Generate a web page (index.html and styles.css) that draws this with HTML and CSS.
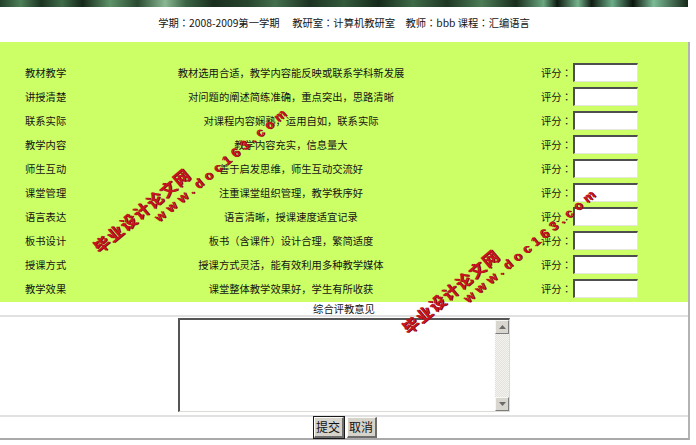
FILE: index.html
```html
<!DOCTYPE html>
<html lang="zh-CN">
<head>
<meta charset="utf-8">
<title>教学评价</title>
<link rel="stylesheet" href="styles.css">
</head>
<body>
<div class="page">
  <div class="banner"></div>
  <div class="header">学期<span class="c">：</span>2008-2009第一学期　 教研室<span class="c">：</span>计算机教研室　教师<span class="c">：</span>bbb 课程<span class="c">：</span>汇编语言</div>
  <form class="form">
    <div class="rating">
      <div class="row"><span class="label">教材教学</span><span class="desc">教材选用合适，教学内容能反映或联系学科新发展</span><span class="score-cell">评分<span class="c">：</span><input class="score" type="text"></span></div>
      <div class="row"><span class="label">讲授清楚</span><span class="desc">对问题的阐述简练准确，重点突出，思路清晰</span><span class="score-cell">评分<span class="c">：</span><input class="score" type="text"></span></div>
      <div class="row"><span class="label">联系实际</span><span class="desc">对课程内容娴熟，运用自如，联系实际</span><span class="score-cell">评分<span class="c">：</span><input class="score" type="text"></span></div>
      <div class="row"><span class="label">教学内容</span><span class="desc">教学内容充实，信息量大</span><span class="score-cell">评分<span class="c">：</span><input class="score" type="text"></span></div>
      <div class="row"><span class="label">师生互动</span><span class="desc">善于启发思维，师生互动交流好</span><span class="score-cell">评分<span class="c">：</span><input class="score" type="text"></span></div>
      <div class="row"><span class="label">课堂管理</span><span class="desc">注重课堂组织管理，教学秩序好</span><span class="score-cell">评分<span class="c">：</span><input class="score" type="text"></span></div>
      <div class="row"><span class="label">语言表达</span><span class="desc">语言清晰，授课速度适宜记录</span><span class="score-cell">评分<span class="c">：</span><input class="score" type="text"></span></div>
      <div class="row"><span class="label">板书设计</span><span class="desc">板书（含课件）设计合理，繁简适度</span><span class="score-cell">评分<span class="c">：</span><input class="score" type="text"></span></div>
      <div class="row"><span class="label">授课方式</span><span class="desc">授课方式灵活，能有效利用多种教学媒体</span><span class="score-cell">评分<span class="c">：</span><input class="score" type="text"></span></div>
      <div class="row"><span class="label">教学效果</span><span class="desc">课堂整体教学效果好，学生有所收获</span><span class="score-cell">评分<span class="c">：</span><input class="score" type="text"></span></div>
    </div>
    <div class="comment-title">综合评教意见</div>
    <div class="comment-body">
      <div class="ta">
        <textarea class="ta-input"></textarea>
        <div class="sb">
          <span class="sb-btn"><svg width="7" height="4" viewBox="0 0 7 4"><polygon points="0,4 7,4 3.5,0" fill="#6a6a6a"/></svg></span>
          <span class="sb-track"></span>
          <span class="sb-btn"><svg width="7" height="4" viewBox="0 0 7 4"><polygon points="0,0 7,0 3.5,4" fill="#6a6a6a"/></svg></span>
        </div>
      </div>
    </div>
    <div class="actions">
      <button type="button" class="btn btn-default">提交</button>
      <button type="button" class="btn">取消</button>
    </div>
  </form>
  <div class="wm wm-one">
    <div class="wm-cn">毕业设计论文网</div>
    <div class="wm-en">www.doc163.com</div>
  </div>
  <div class="wm wm-two">
    <div class="wm-cn">毕业设计论文网</div>
    <div class="wm-en">www.doc163.com</div>
  </div>
</div>
</body>
</html>
```

FILE: styles.css
```css
* { box-sizing: border-box; }

body {
  margin: 0;
  background: #fff;
  font-family: "Noto Sans CJK SC", "Noto Sans", sans-serif;
  font-size: 10.3px;
  color: #141414;
}

.page {
  position: relative;
  width: 696px;
  height: 445px;
  overflow: hidden;
}

.c { font-family: "Noto Sans CJK TC", "Noto Sans CJK SC", sans-serif; }

.banner {
  width: 688px;
  height: 7px;
  background: linear-gradient(90deg,
    #23402a 0%, #4d7f58 3%, #1c3322 6%, #3f6b48 9%, #15281a 12%,
    #5e9268 16%, #2a4a31 20%, #89b893 24%, #3b6444 27%, #1a2f1f 31%,
    #27452d 36%, #446f4d 40%, #1d3322 45%, #335a3b 50%, #162a1b 55%,
    #3e6a47 60%, #1f3724 65%, #4c7c56 70%, #1a2e1e 75%, #6aa77f 79%,
    #0e1a10 81%, #75b38c 84%, #101c12 86%, #6cad88 89%, #0b150d 92%,
    #7bbb95 95%, #16281a 100%);
}

.header {
  width: 688px;
  height: 35px;
  padding-bottom: 4px;
  display: flex;
  align-items: center;
  justify-content: center;
  white-space: pre;
}

.form {
  width: 690px;
  margin: 0;
  border-right: 2px solid #b3b3b3;
  border-bottom: 2px solid #a9a9a9;
}

.rating {
  background: #ccff66;
  padding: 18px 0 2px;
}

.row {
  display: grid;
  grid-template-columns: 130px 322px 1fr;
  height: 24px;
  align-items: center;
}

.label { padding-left: 25px; }

.desc { text-align: center; white-space: nowrap; }

.score-cell {
  display: flex;
  align-items: center;
  padding-left: 89px;
}

.score {
  width: 65px;
  height: 19px;
  margin: 0 0 0 1px;
  padding: 0;
  background: #fff;
  border-style: solid;
  border-width: 2px 1px 1px 2px;
  border-color: #4e4e4e #e6e6dc #e6e6dc #4e4e4e;
  outline: none;
}

.comment-title {
  height: 15px;
  line-height: 13px;
  text-align: center;
  border-bottom: 2px solid #e1e1e1;
}

.comment-body {
  height: 100px;
  padding-top: 1px;
  display: flex;
  justify-content: center;
  border-bottom: 2px solid #e1e1e1;
}

.ta {
  display: flex;
  width: 332px;
  height: 94px;
  border-style: solid;
  border-width: 2px 1px 1px 2px;
  border-color: #555 #dcdcd4 #dcdcd4 #555;
  background: #fff;
}

.ta-input {
  flex: 1;
  border: none;
  resize: none;
  outline: none;
  margin: 0;
  padding: 2px;
  font: inherit;
}

.sb {
  width: 14px;
  display: flex;
  flex-direction: column;
  background: repeating-conic-gradient(#f4f3ef 0 25%, #e2e1dc 0 50%) 0 0 / 2px 2px;
}

.sb-btn {
  height: 14px;
  display: flex;
  align-items: center;
  justify-content: center;
  background: #d8d6cf;
  border-style: solid;
  border-width: 1px;
  border-color: #f7f7f3 #7d7d7d #7d7d7d #f7f7f3;
}

.sb-track { flex: 1; }

.actions {
  height: 21px;
  display: flex;
  justify-content: center;
  gap: 3px;
  padding-left: 2px;
}

.btn {
  width: 30px;
  height: 21px;
  padding: 0;
  font-family: "Noto Sans CJK SC", sans-serif;
  font-size: 12px;
  line-height: 1;
  color: #111;
  background: #d6d3cb;
  border-style: solid;
  border-width: 1px 2px 2px 1px;
  border-color: #fbfbf8 #6d6d6d #6d6d6d #fbfbf8;
}

.btn-default {
  outline: 1px solid #1a1a1a;
}

.wm {
  position: absolute;
  transform-origin: 0 0;
  transform: rotate(-40deg);
  color: #c81420;
  font-weight: bold;
  white-space: nowrap;
  text-shadow: 1px 1px 0 #7e0a10;
}

.wm-one { left: 89px; top: 242px; }
.wm-two { left: 398px; top: 323px; }

.wm-cn {
  height: 18px;
  line-height: 18px;
  font-size: 16px;
  letter-spacing: 1.3px;
  font-family: "Noto Sans CJK SC", sans-serif;
}

.wm-en {
  height: 16px;
  line-height: 16px;
  margin-left: 66px;
  font-family: "Liberation Sans", Arial, sans-serif;
  font-size: 13px;
  letter-spacing: 4.5px;
}
```
